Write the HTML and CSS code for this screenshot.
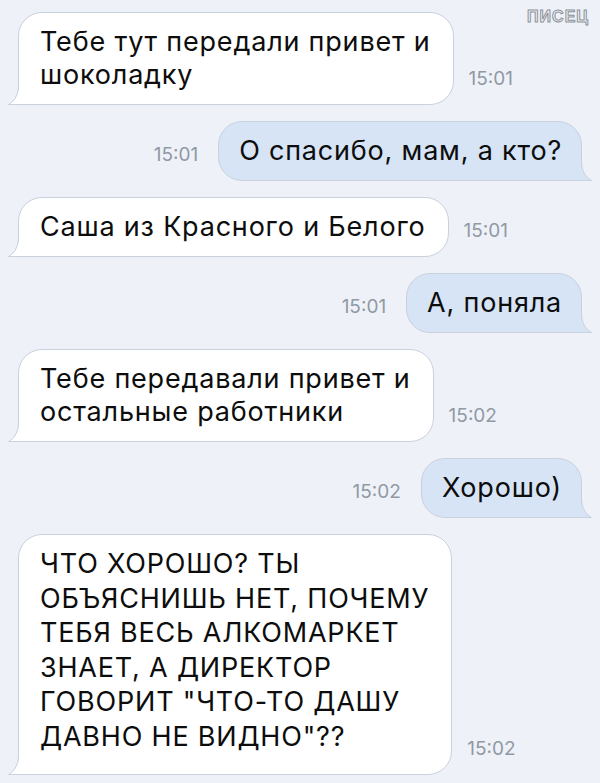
FILE: index.html
```html
<!DOCTYPE html>
<html lang="ru">
<head>
<meta charset="UTF-8" />
<meta name="viewport" content="width=device-width, initial-scale=1" />
<title>Сообщения</title>
<link rel="stylesheet" href="styles.css">
</head>
<body>

<div class="watermark">ПИСЕЦ</div>

<div class="chat">

  <div class="row in">
    <div class="bubble">Тебе тут передали привет и<br>шоколадку
      <svg class="tail" width="12" height="20" viewBox="0 0 12 20"><path class="tail-fill" d="M11 0 C11 9 7 16 0.5 19.5 L12 19.5 L12 0 Z"/><path class="tail-line" d="M10.5 0 C10.5 9 7 16 0.5 19.5 L12 19.5"/></svg>
    </div>
    <span class="time">15:01</span>
  </div>

  <div class="row out">
    <span class="time">15:01</span>
    <div class="bubble">О спасибо, мам, а кто?
      <svg class="tail" width="12" height="20" viewBox="0 0 12 20"><path class="tail-fill" d="M1 0 C1 9 5 16 11.5 19.5 L0 19.5 L0 0 Z"/><path class="tail-line" d="M1.5 0 C1.5 9 5 16 11.5 19.5 L0 19.5"/></svg>
    </div>
  </div>

  <div class="row in">
    <div class="bubble">Саша из Красного и Белого
      <svg class="tail" width="12" height="20" viewBox="0 0 12 20"><path class="tail-fill" d="M11 0 C11 9 7 16 0.5 19.5 L12 19.5 L12 0 Z"/><path class="tail-line" d="M10.5 0 C10.5 9 7 16 0.5 19.5 L12 19.5"/></svg>
    </div>
    <span class="time">15:01</span>
  </div>

  <div class="row out">
    <span class="time">15:01</span>
    <div class="bubble">А, поняла
      <svg class="tail" width="12" height="20" viewBox="0 0 12 20"><path class="tail-fill" d="M1 0 C1 9 5 16 11.5 19.5 L0 19.5 L0 0 Z"/><path class="tail-line" d="M1.5 0 C1.5 9 5 16 11.5 19.5 L0 19.5"/></svg>
    </div>
  </div>

  <div class="row in">
    <div class="bubble">Тебе передавали привет и<br>остальные работники
      <svg class="tail" width="12" height="20" viewBox="0 0 12 20"><path class="tail-fill" d="M11 0 C11 9 7 16 0.5 19.5 L12 19.5 L12 0 Z"/><path class="tail-line" d="M10.5 0 C10.5 9 7 16 0.5 19.5 L12 19.5"/></svg>
    </div>
    <span class="time">15:02</span>
  </div>

  <div class="row out">
    <span class="time">15:02</span>
    <div class="bubble">Хорошо)
      <svg class="tail" width="12" height="20" viewBox="0 0 12 20"><path class="tail-fill" d="M1 0 C1 9 5 16 11.5 19.5 L0 19.5 L0 0 Z"/><path class="tail-line" d="M1.5 0 C1.5 9 5 16 11.5 19.5 L0 19.5"/></svg>
    </div>
  </div>

  <div class="row in">
    <div class="bubble long">ЧТО ХОРОШО? ТЫ<br>ОБЪЯСНИШЬ НЕТ, ПОЧЕМУ<br>ТЕБЯ ВЕСЬ АЛКОМАРКЕТ<br>ЗНАЕТ, А ДИРЕКТОР<br>ГОВОРИТ "ЧТО-ТО ДАШУ<br>ДАВНО НЕ ВИДНО"??
      <svg class="tail" width="12" height="20" viewBox="0 0 12 20"><path class="tail-fill" d="M11 0 C11 9 7 16 0.5 19.5 L12 19.5 L12 0 Z"/><path class="tail-line" d="M10.5 0 C10.5 9 7 16 0.5 19.5 L12 19.5"/></svg>
    </div>
    <span class="time">15:02</span>
  </div>

</div>

</body>
</html>
```

FILE: styles.css
```css
body {
  margin: 0;
  background: #eef2f8;
  font-family: Inter, "Liberation Sans", Arial, sans-serif;
  color: #0d0d0d;
}

.watermark {
  position: absolute;
  top: 8px;
  right: 11px;
  font-family: "Liberation Sans", Arial, sans-serif;
  font-size: 16px;
  font-weight: bold;
  letter-spacing: 1px;
  color: #eef2f8;
  -webkit-text-stroke: 1px #8d9299;
}

.chat {
  display: flex;
  flex-direction: column;
  gap: 16px;
  padding: 12px 18px;
}

.row { display: flex; align-items: flex-end; }
.row.in { justify-content: flex-start; }
.row.out { justify-content: flex-end; }

.bubble {
  position: relative;
  padding: 12px 22px 13px 21px;
  font-size: 27px;
  letter-spacing: 0.8px;
  line-height: 33px;
  border: 1px solid #c9d1dc;
  border-radius: 24px;
  background: #fff;
}
.row.in .bubble { border-bottom-left-radius: 0; }
.row.out .bubble {
  background: #d6e4f6;
  border-bottom-right-radius: 0;
  padding: 12px 19px 13px 20px;
}
.bubble.long { line-height: 34.5px; padding-bottom: 20px; }

.tail { position: absolute; bottom: -1px; }
.row.in .tail { left: -11px; }
.row.out .tail { right: -11px; }
.tail-fill { stroke: none; }
.row.in .tail-fill { fill: #fff; }
.row.out .tail-fill { fill: #d6e4f6; }
.tail-line { fill: none; stroke: #c9d1dc; stroke-width: 1; }

.time {
  font-size: 19px;
  color: #9099a4;
  margin-bottom: 15px;
}
.row.in .time { margin-left: 15px; }
.row.out .time { margin-right: 20px; }
```
